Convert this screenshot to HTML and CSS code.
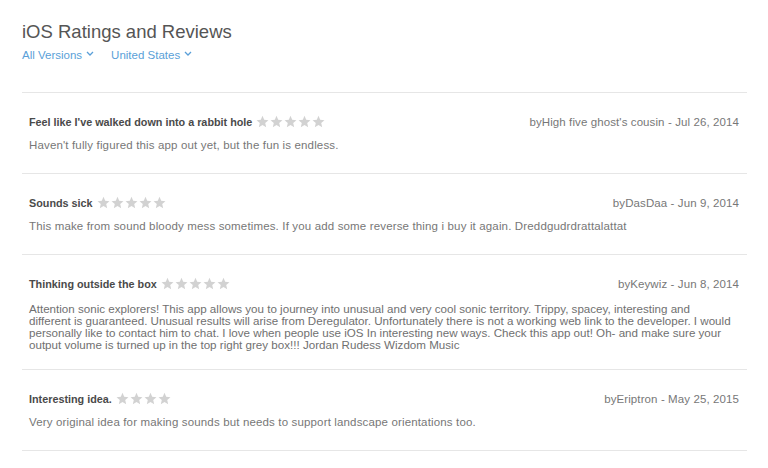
FILE: index.html
```html
<!DOCTYPE html>
<html>
<head>
<meta charset="utf-8">
<link rel="stylesheet" href="styles.css">
</head>
<body>
<div class="page">
  <h1 class="heading">iOS Ratings and Reviews</h1>
  <div class="filters">
    <span class="filter">All Versions <svg class="chev" width="8" height="5" viewBox="0 0 8 5"><path d="M1 1l3 3 3-3" fill="none" stroke="#5a9fd8" stroke-width="1.3"/></svg></span>
    <span class="filter">United States <svg class="chev" width="8" height="5" viewBox="0 0 8 5"><path d="M1 1l3 3 3-3" fill="none" stroke="#5a9fd8" stroke-width="1.3"/></svg></span>
  </div>
  <div class="reviews">
    <div class="review">
      <div class="head">
        <div class="title">Feel like I've walked down into a rabbit hole <span class="stars" data-n="5"></span></div>
        <div class="author">byHigh five ghost's cousin - Jul 26, 2014</div>
      </div>
      <p class="body">Haven't fully figured this app out yet, but the fun is endless.</p>
    </div>
    <div class="review">
      <div class="head">
        <div class="title">Sounds sick <span class="stars" data-n="5"></span></div>
        <div class="author">byDasDaa - Jun 9, 2014</div>
      </div>
      <p class="body">This make from sound bloody mess sometimes. If you add some reverse thing i buy it again. Dreddgudrdrattalattat</p>
    </div>
    <div class="review long">
      <div class="head">
        <div class="title">Thinking outside the box <span class="stars" data-n="5"></span></div>
        <div class="author">byKeywiz - Jun 8, 2014</div>
      </div>
      <p class="body">Attention sonic explorers! This app allows you to journey into unusual and very cool sonic territory. Trippy, spacey, interesting and<br>different is guaranteed. Unusual results will arise from Deregulator. Unfortunately there is not a working web link to the developer. I would<br>personally like to contact him to chat. I love when people use iOS In interesting new ways. Check this app out! Oh- and make sure your<br>output volume is turned up in the top right grey box!!! Jordan Rudess Wizdom Music</p>
    </div>
    <div class="review">
      <div class="head">
        <div class="title">Interesting idea. <span class="stars" data-n="4"></span></div>
        <div class="author">byEriptron - May 25, 2015</div>
      </div>
      <p class="body">Very original idea for making sounds but needs to support landscape orientations too.</p>
    </div>
  </div>
</div>
<script src="script.js"></script>
</body>
</html>
```

FILE: script.js
```js
document.querySelectorAll('.stars').forEach(function (el) {
  var n = parseInt(el.getAttribute('data-n'), 10);
  var html = '';
  for (var i = 0; i < n; i++) {
    html += '<svg class="star" width="13" height="13" viewBox="0 0 24 24"><path d="M12 1.5l3.1 7.3 7.9.7-6 5.2 1.8 7.8L12 18.4l-6.8 4.1L7 14.7 1 9.5l7.9-.7z" fill="#d2d2d2"/></svg>';
  }
  el.innerHTML = html;
});
```

FILE: styles.css
```css
html, body {
  margin: 0;
  padding: 0;
  background: #ffffff;
}
body {
  font-family: "Liberation Sans", Arial, sans-serif;
  color: #666;
}
.page {
  padding: 19px 21px 0 22px;
}
.heading {
  margin: 0;
  font-size: 18.5px;
  font-weight: normal;
  color: #555;
  line-height: 26px;
}
.filters {
  display: flex;
  gap: 17px;
  margin-top: 2px;
  font-size: 11.5px;
  color: #5a9fd8;
  line-height: 16px;
}
.filter {
  display: flex;
  align-items: center;
  gap: 4px;
}
.chev {
  margin-top: -4px;
}
.reviews {
  margin-top: 29px;
  border-top: 1px solid #e6e6e6;
}
.review {
  border-bottom: 1px solid #e6e6e6;
  padding: 21px 8px 21px 7px;
}
.head {
  display: flex;
  justify-content: space-between;
  align-items: center;
}
.title {
  font-size: 10.8px;
  font-weight: bold;
  color: #4a4a4a;
  display: flex;
  align-items: center;
  gap: 4px;
  line-height: 16px;
}
.stars {
  display: inline-flex;
  gap: 1px;
  margin-top: -1px;
}
.author {
  font-size: 11.5px;
  letter-spacing: 0.1px;
  color: #777;
  line-height: 16px;
}
.body {
  margin: 8px 0 0;
  font-size: 11.5px;
  letter-spacing: 0.15px;
  color: #777;
  line-height: 14px;
}
.long {
  padding-bottom: 18px;
}
.long .body {
  margin-top: 11px;
  font-size: 11.6px;
  letter-spacing: 0;
  line-height: 12px;
  color: #707070;
  white-space: nowrap;
}
```
